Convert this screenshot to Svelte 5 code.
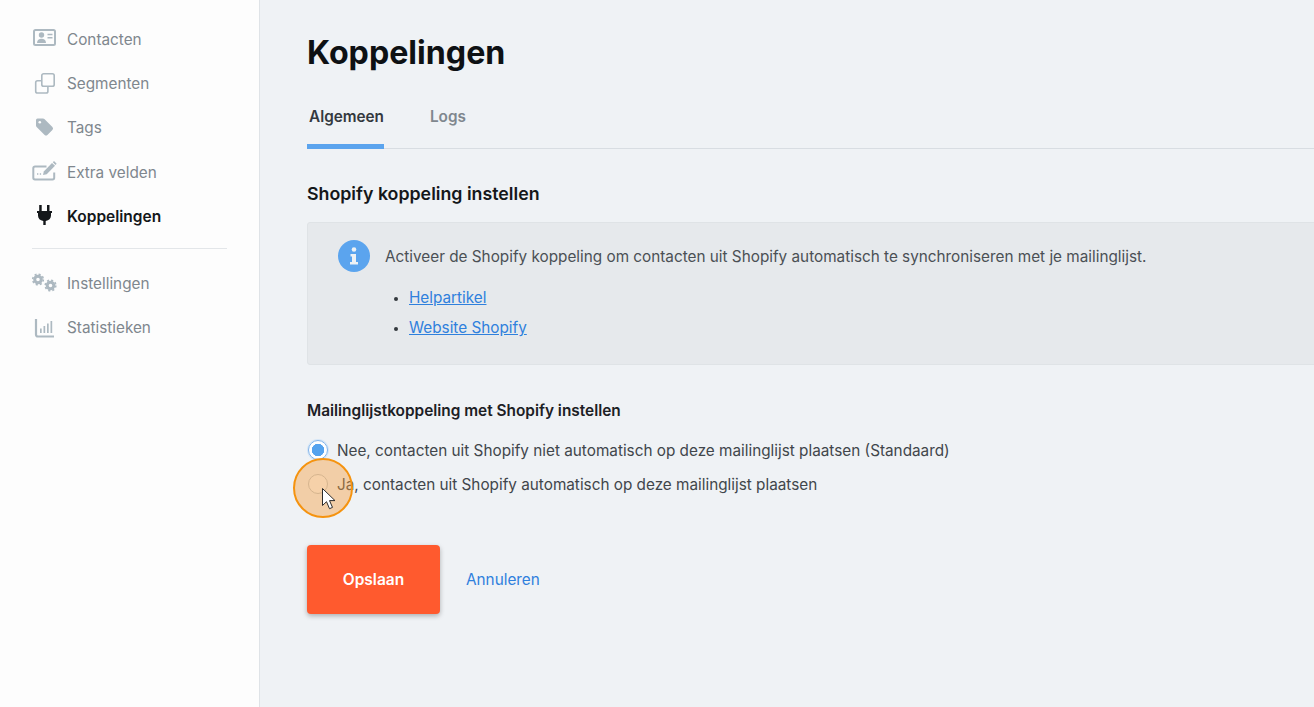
<script>
  const topItems = [
    { id: 'card', label: 'Contacten' },
    { id: 'copy', label: 'Segmenten' },
    { id: 'tag', label: 'Tags' },
    { id: 'edit', label: 'Extra velden' },
    { id: 'plug', label: 'Koppelingen', active: true }
  ];
  const bottomItems = [
    { id: 'cogs', label: 'Instellingen' },
    { id: 'chart', label: 'Statistieken' }
  ];
</script>

{#snippet icon(id)}
  <svg class="icon" viewBox="0 0 24 20" width="24" height="20" aria-hidden="true">
    {#if id === 'card'}
      <rect x="2" y="1" width="21" height="15" rx="1.500" fill="none" stroke="currentColor" stroke-width="2" />
      <circle cx="9.500" cy="6" r="2.700" fill="currentColor" />
      <path d="M5 14c0-3 2-4.200 4.500-4.200S14 11 14 14z" fill="currentColor" />
      <path d="M15.500 5.500h5M15.500 8.800h5" stroke="currentColor" stroke-width="1.500" />
    {:else if id === 'copy'}
      <path d="M9 6.800H5.500a1.800 1.800 0 0 0-1.800 1.800v8.600A1.800 1.800 0 0 0 5.500 19h8.600a1.800 1.800 0 0 0 1.800-1.800V13" fill="none" stroke="currentColor" stroke-width="1.600" />
      <rect x="9.800" y="-.2" width="12.400" height="12.400" rx="1.800" fill="none" stroke="currentColor" stroke-width="1.600" />
    {:else if id === 'tag'}
      <path d="M5.500.500h5.500a2 2 0 0 1 1.400.600l8 8a2 2 0 0 1 0 2.800l-5 5a2 2 0 0 1-2.800 0l-8-8A2 2 0 0 1 4 7.500V2a1.500 1.500 0 0 1 1.500-1.500z" fill="currentColor" />
      <circle cx="7.800" cy="4.300" r="1.300" fill="#fdfdfd" />
    {:else if id === 'edit'}
      <path d="M14.500 4.500H3a1.700 1.700 0 0 0-1.700 1.700v9.600A1.700 1.700 0 0 0 3 17.500h17.500a1.700 1.700 0 0 0 1.700-1.700v-5.300" fill="none" stroke="currentColor" stroke-width="2" />
      <path d="M11 13l.8-3.500L20 1l3 2.800-8.300 8.400z" fill="currentColor" />
      <path d="M20.800.300L22-1l2.700 2.700-1.200 1.300z" fill="currentColor" />
      <path d="M5 12h1.300M7.800 12h1.300" stroke="currentColor" stroke-width="1.600" />
    {:else if id === 'plug'}
      <path d="M7.200-2h2.500v6H7.200zM15 -2h2.500v6H15z" fill="currentColor" />
      <path d="M5 4h15v2h-1v2.500c0 3-2 5-5.300 5.500v4h-2.400v-4C8 13.500 6 11.500 6 8.500V6H5z" fill="currentColor" />
    {:else if id === 'cogs'}
      <circle cx="6" cy="6.500" r="3.300" fill="none" stroke="currentColor" stroke-width="3" />
      <circle cx="6" cy="6.500" r="5.300" fill="none" stroke="currentColor" stroke-width="1.600" stroke-dasharray="2.100 2.060" />
      <circle cx="18.500" cy="12.500" r="3.300" fill="none" stroke="currentColor" stroke-width="3" />
      <circle cx="18.500" cy="12.500" r="5.300" fill="none" stroke="currentColor" stroke-width="1.600" stroke-dasharray="2.100 2.060" />
    {:else if id === 'chart'}
      <path d="M4 1v15.500a2 2 0 0 0 2 2h16" fill="none" stroke="currentColor" stroke-width="2.200" />
      <path d="M8 10.500h1.700V15H8zM11.500 8h1.700v7h-1.700zM15 5.500h1.700V15H15zM18.500 3h1.700v12h-1.700z" fill="currentColor" />
    {/if}
  </svg>
{/snippet}

<div class="page">
  <aside class="sidebar">
    <ul class="nav nav--top">
      {#each topItems as item}
        <li class="nav__item" class:active={item.active}>
          {@render icon(item.id)}
          <span>{item.label}</span>
        </li>
      {/each}
    </ul>
    <ul class="nav">
      {#each bottomItems as item}
        <li class="nav__item">
          {@render icon(item.id)}
          <span>{item.label}</span>
        </li>
      {/each}
    </ul>
  </aside>

  <main class="content">
    <h1 class="title">Koppelingen</h1>

    <div class="tabs">
      <span class="tab tab--active">Algemeen</span>
      <span class="tab">Logs</span>
    </div>

    <h2 class="section-title">Shopify koppeling instellen</h2>

    <div class="notice">
      <div class="notice__row">
        <svg class="notice__icon" viewBox="0 0 32 32" width="32" height="32" aria-hidden="true">
          <circle cx="16" cy="16" r="16" fill="#5ba4ee" />
          <circle cx="16" cy="9.500" r="2.300" fill="#eef2f5" />
          <path d="M12.500 14h5.500v8h2v2.500h-8V22h2v-5.500h-1.500z" fill="#eef2f5" />
        </svg>
        <p class="notice__text">Activeer de Shopify koppeling om contacten uit Shopify automatisch te synchroniseren met je mailinglijst.</p>
      </div>
      <ul class="notice__links">
        <li><a href="#help">Helpartikel</a></li>
        <li><a href="#shopify">Website Shopify</a></li>
      </ul>
    </div>

    <h3 class="field-title">Mailinglijstkoppeling met Shopify instellen</h3>

    <div class="radios">
      <label class="radio">
        <span class="radio__dot radio__dot--on"></span>
        Nee, contacten uit Shopify niet automatisch op deze mailinglijst plaatsen (Standaard)
      </label>
      <label class="radio">
        <span class="radio__dot"></span>
        Ja, contacten uit Shopify automatisch op deze mailinglijst plaatsen
        <span class="highlight"></span>
        <svg class="cursor" viewBox="0 0 16 24" width="16" height="24" aria-hidden="true">
          <path d="M1.500 1.500v17l4-3.800 3 7 3-1.300-3-6.800h5.500z" fill="#fff" stroke="#2b2b2b" stroke-width="1" stroke-linejoin="round" />
        </svg>
      </label>
    </div>

    <div class="actions">
      <button class="save" type="button">Opslaan</button>
      <a class="cancel" href="#cancel">Annuleren</a>
    </div>
  </main>
</div>

<style>
  :global(body) {
    margin: 0;
    background: #eff2f5;
  }

  .page {
    display: flex;
    height: 707px;
    overflow: hidden;
    font-family: Inter, "Liberation Sans", sans-serif;
    color: #41464b;
  }

  .sidebar {
    flex: 0 0 260px;
    box-sizing: border-box;
    background: #fdfdfd;
    border-right: 1px solid #dfe3e7;
    padding: 17px 32px 0;
  }

  .nav {
    list-style: none;
    margin: 0;
    padding: 0;
  }

  .nav--top {
    border-bottom: 1px solid #e3e6e9;
    padding-bottom: 9px;
    margin-bottom: 12px;
    width: 195px;
  }

  .nav__item {
    display: flex;
    align-items: center;
    gap: 11px;
    height: 44.400px;
    font-size: 15.300px;
    color: #7f878e;
    white-space: nowrap;
  }

  .nav__item .icon {
    flex: none;
    color: #adb9c1;
    overflow: visible;
  }

  .nav__item.active {
    color: #14171a;
    font-weight: 600;
    font-size: 15.500px;
  }

  .nav__item.active .icon {
    color: #14171a;
  }

  .content {
    flex: 1;
    min-width: 0;
    padding: 0 0 0 47px;
  }

  .title {
    margin: 0;
    padding-top: 34px;
    font-size: 32.200px;
    line-height: 38px;
    font-weight: 700;
    color: #0e1114;
  }

  .tabs {
    display: flex;
    gap: 46px;
    margin-top: 35px;
    border-bottom: 1px solid #d8dde2;
  }

  .tab {
    padding: 0 0 17px;
    font-size: 15.300px;
    line-height: 20px;
    font-weight: 600;
    color: #7f878e;
    margin-bottom: -1px;
  }

  .tab--active {
    color: #34393e;
    padding: 0 0 17px 2px;
    border-bottom: 5px solid #5ba4ee;
  }

  .section-title {
    margin: 34px 0 0;
    font-size: 17.800px;
    line-height: 22px;
    font-weight: 600;
    color: #14171a;
  }

  .notice {
    box-sizing: border-box;
    height: 143px;
    margin-top: 17px;
    padding: 17px 30px;
    background: #e6e9ec;
    border: 1px solid #dfe3e6;
    border-radius: 3px;
    margin-right: -4px;
  }

  .notice__row {
    display: flex;
    align-items: center;
    gap: 15px;
  }

  .notice__text {
    margin: 0;
    font-size: 15.300px;
    white-space: nowrap;
    color: #4b5055;
  }

  .notice__links {
    margin: 11px 0 0;
    padding: 0 0 0 71px;
    font-size: 15.300px;
    line-height: 30px;
    color: #34393e;
  }

  .notice__links li::marker {
    font-size: 12px;
  }

  .notice__links a {
    color: #2f80dd;
  }

  .field-title {
    margin: 36px 0 0;
    font-size: 15.400px;
    line-height: 20px;
    font-weight: 600;
    color: #1c2024;
  }

  .radios {
    margin-top: 12px;
  }

  .radio {
    position: relative;
    display: flex;
    align-items: center;
    gap: 6px;
    height: 34px;
    font-size: 15.300px;
    color: #41464b;
    white-space: nowrap;
  }

  .radio__dot {
    box-sizing: border-box;
    width: 20px;
    height: 20px;
    flex: none;
    margin-left: 1px;
    margin-right: 3px;
    border-radius: 50%;
    background: #f6f7f8;
    border: 1px solid #bfc5ca;
  }

  .radio__dot--on {
    background: radial-gradient(circle, #55a3ee 0 6px, #fff 6.500px);
    border-color: #7fb3ea;
    box-shadow: 0 0 0 1px #d5e6f7;
  }

  .highlight {
    position: absolute;
    left: -14px;
    top: -9px;
    width: 60px;
    height: 60px;
    box-sizing: border-box;
    border-radius: 50%;
    border: 2px solid #f5930f;
    background: rgba(245, 158, 60, 0.42);
  }

  .cursor {
    position: absolute;
    left: 14px;
    top: 20px;
  }

  .actions {
    display: flex;
    align-items: center;
    gap: 26px;
    margin-top: 44px;
  }

  .save {
    width: 133px;
    height: 69px;
    border: 0;
    border-radius: 4px;
    background: #ff5a2e;
    color: #fff;
    font: 600 15.500px Inter, "Liberation Sans", sans-serif;
    box-shadow: 0 2px 5px rgba(0, 0, 0, 0.28);
  }

  .cancel {
    font-size: 15.300px;
    color: #2f80dd;
    text-decoration: none;
  }
</style>
